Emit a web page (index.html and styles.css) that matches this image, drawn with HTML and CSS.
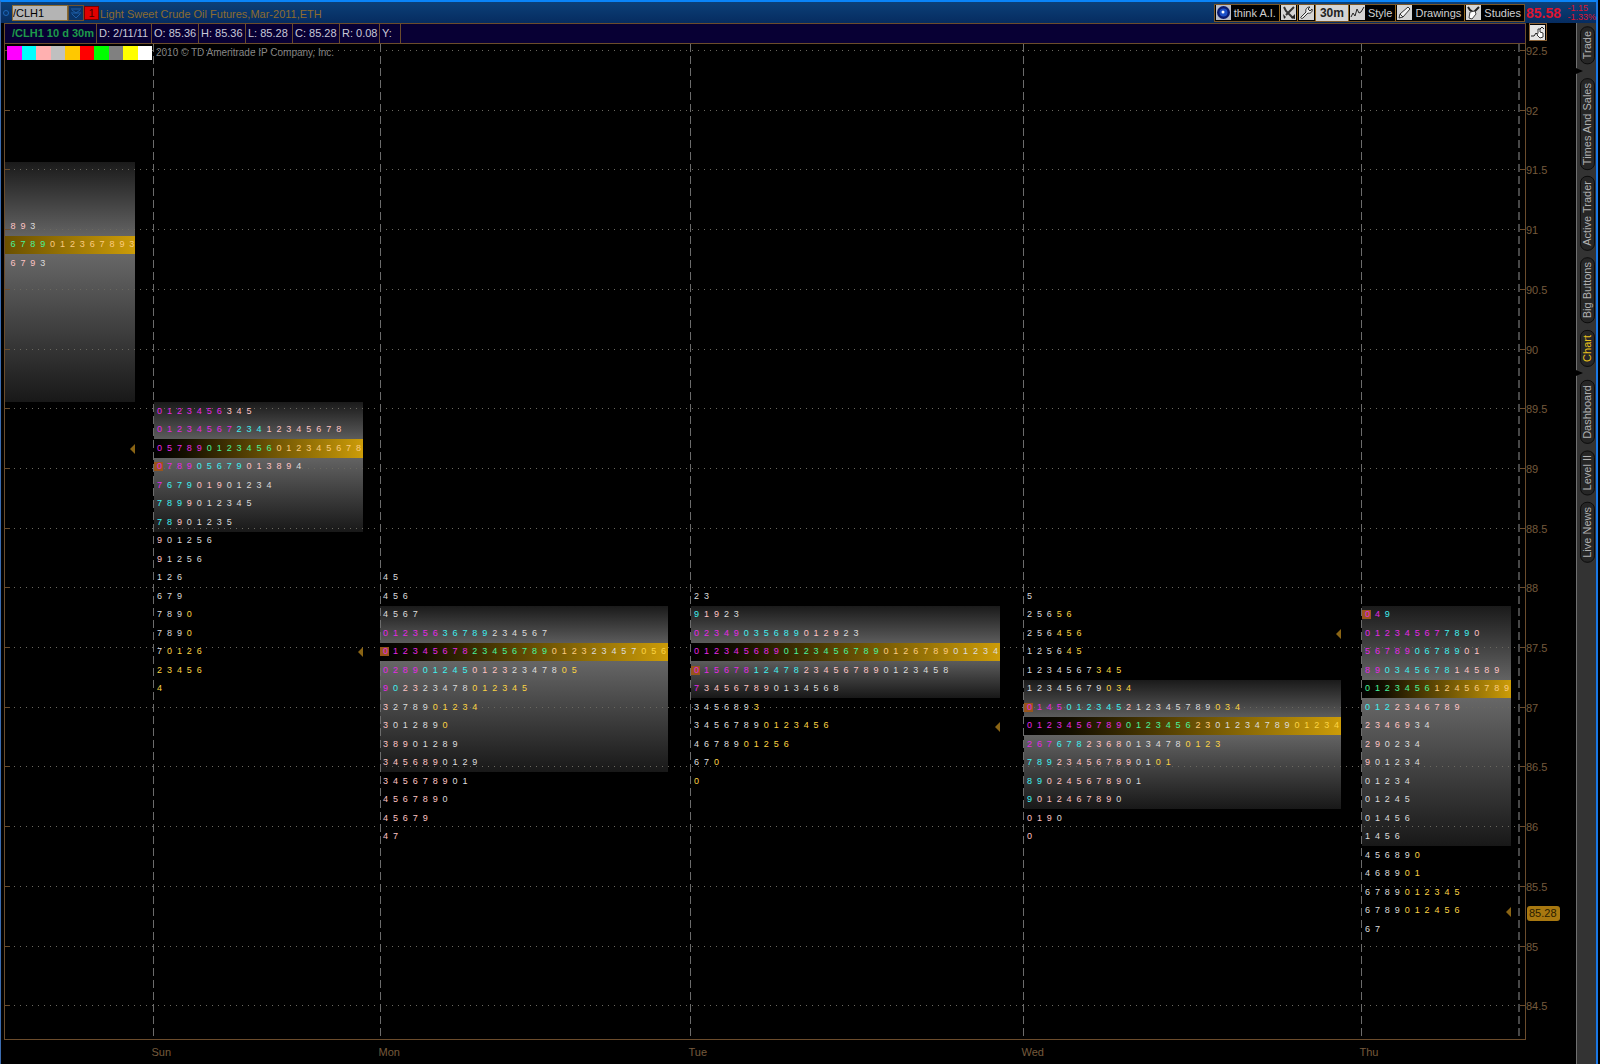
FILE: index.html
```html
<!DOCTYPE html>
<html lang="en">
<head>
  <meta charset="UTF-8">
  <meta name="viewport" content="width=device-width, initial-scale=1.0">
  <title>/CLH1 - Chart</title>
  <link rel="stylesheet" href="styles.css">
</head>
<body>
  <div class="window">
    <header class="topbar">
      <span class="link-dot"></span>
      <input class="symbol" type="text" value="/CLH1" aria-label="Symbol">
      <button class="symbol-drop" aria-label="Symbol list">
        <svg viewBox="0 0 14 14" width="14" height="14"><path d="M2 3h10M3 4l4 3 4-3M2 7h10M3 8l4 4 4-4" fill="none" stroke="#1d5fa8"/></svg>
      </button>
      <button class="link-color">1</button>
      <h1 class="title">Light Sweet Crude Oil Futures,Mar-2011,ETH</h1>

      <div class="toolbar">
        <button class="tool">
          <svg class="icon" viewBox="0 0 15 15"><rect width="15" height="15" fill="#b8bcc8"/><circle cx="7.5" cy="7.5" r="6.5" fill="#0a1a70"/><circle cx="7.5" cy="7.5" r="4" fill="#1c50c8"/><circle cx="7" cy="7" r="1.5" fill="#fff"/></svg>
          think A.I.
        </button>
        <button class="tool" aria-label="Cursor tools">
          <svg class="icon" viewBox="0 0 15 15"><rect width="15" height="15" fill="#d4d4d4"/><path d="M3 2l2 4 7 7M13 2L5 10" fill="none" stroke="#333" stroke-width="2"/><path d="M2 9l3 3-2 2zM10 13l4-4v5z" fill="#222"/></svg>
        </button>
        <button class="tool" aria-label="Settings">
          <svg class="icon" viewBox="0 0 15 15"><rect width="15" height="15" fill="#d4d4d4"/><path d="M2 12l5-5c-1-3 1-5 4-5L9 4l2 2 2-2c1 3-2 5-4 4l-5 5c-1 1-3 0-2-1z" fill="#eee" stroke="#333"/></svg>
        </button>
        <button class="tool period">30m</button>
        <button class="tool">
          <svg class="icon" viewBox="0 0 15 15"><rect width="15" height="15" fill="#d4d4d4"/><path d="M1 12l2-4 2 3 2-7 2 4 2-1 3-5" fill="none" stroke="#222"/></svg>
          Style
        </button>
        <button class="tool">
          <svg class="icon" viewBox="0 0 15 15"><rect width="15" height="15" fill="#d4d4d4"/><path d="M2 13l1-4 8-7 2 2-7 8zM3 9l3 3" fill="#f4f4f4" stroke="#333"/></svg>
          Drawings
        </button>
        <button class="tool">
          <svg class="icon" viewBox="0 0 15 15"><rect width="15" height="15" fill="#d4d4d4"/><path d="M2 2l2 3 3 2M13 2L8 7" fill="none" stroke="#222" stroke-width="2"/><path d="M4 7l5-1 1 3-4 5-3-1z" fill="#fff" stroke="#444"/></svg>
          Studies
        </button>
      </div>
      <div class="quote">
        <strong>85.58</strong>
        <div class="change"><span>-1.15</span><span>-1.33%</span></div>
      </div>
    </header>

    <div class="workspace">
      <main class="chart-area">
        <div class="status-row">
          <div class="status">
            <span class="cell name">/CLH1 10 d 30m</span>
            <span class="cell date">D: 2/11/11</span>
            <span class="cell">O: 85.36</span>
            <span class="cell">H: 85.36</span>
            <span class="cell">L: 85.28</span>
            <span class="cell">C: 85.28</span>
            <span class="cell range">R: 0.08</span>
            <span class="cell last">Y:</span>
          </div>
          <div class="axis-head">
            <button class="pan" aria-label="Pan chart">
              <svg viewBox="0 0 15 15" width="15" height="15"><rect width="15" height="15" fill="#e4e4e4"/><path d="M1 11h3l2-3 2 2M10 4l2-2 2 2" fill="none" stroke="#222"/><path d="M8 8V4h2v3l3 1v4l-3 1-3-3z" fill="#fff" stroke="#333"/></svg>
            </button>
          </div>
        </div>
        <svg id="chart" class="chart" viewBox="0 0 1572 1020"></svg>
      </main>

      <nav class="side-tabs">
        <button class="tab">Trade</button>
        <span class="notch"></span>
        <button class="tab">Times And Sales</button>
        <button class="tab">Active Trader</button>
        <button class="tab">Big Buttons</button>
        <button class="tab active">Chart</button>
        <span class="notch"></span>
        <button class="tab">Dashboard</button>
        <button class="tab">Level II</button>
        <button class="tab">Live News</button>
      </nav>
    </div>
  </div>
  <script src="chart.js"></script>
</body>
</html>
```
FILE: styles.css
```css
* {
  box-sizing: border-box;
}
body {
  margin: 0;
  background: #000;
  color: #c8c8d8;
  font-family: "Liberation Sans", Arial, sans-serif;
  font-size: 11px;
}
button, input {
  font: inherit;
  margin: 0;
  padding: 0;
  border: 0;
  border-radius: 0;
}
.window {
  display: flex;
  flex-direction: column;
  min-height: 100vh;
  border: solid #1a78e6;
  border-width: 2px 2px 0 1px;
  border-left-color: #3c6cb0;
  border-top-color: #0a84f8;
  margin-right: 2px;
}

/* top bar */
.topbar {
  display: flex;
  align-items: center;
  height: 21px;
  padding-left: 2px;
  background: linear-gradient(#0c4078, #062c60);
}
.link-dot {
  width: 6px;
  height: 6px;
  margin-right: 3px;
  border: 1px solid #1d66b8;
  border-radius: 50%;
}
.symbol {
  width: 56px;
  height: 16px;
  background: #b4b4b4;
  border: 1px solid #8a6a30;
  color: #000;
}
.symbol-drop {
  width: 16px;
  height: 16px;
  background: #0a3468;
  border: 1px solid #6b5230;
}
.symbol-drop svg {
  display: block;
}
.link-color {
  width: 15px;
  height: 14px;
  background: #e00000;
  border: 1px solid #700;
  color: #400;
}
.title {
  flex: 1;
  margin: 2px 0 0 1px;
  font-size: 11px;
  font-weight: normal;
  color: #8c6c30;
}
.toolbar {
  display: flex;
  height: 18px;
  border: 1px solid #7a5626;
  background: #000;
}
.tool {
  display: flex;
  align-items: center;
  gap: 3px;
  padding: 0 3px 0 1px;
  background: #000;
  color: #d0d0d0;
  border-right: 1px solid #96681e;
}
.tool[aria-label] {
  padding-right: 1px;
}
.tool:last-child {
  border-right: 0;
}
.icon {
  width: 15px;
  height: 15px;
}
.tool.period {
  padding: 0 4px;
  background: #d4d4d4;
  color: #222;
  font-size: 12px;
  font-weight: bold;
}
.quote {
  display: flex;
  align-items: center;
  justify-content: space-between;
  width: 71px;
  padding-left: 1px;
  color: #dc1430;
}
.quote strong {
  font-size: 14px;
}
.change {
  display: flex;
  flex-direction: column;
  font-size: 9px;
  line-height: 9px;
}

/* chart column */
.workspace {
  display: flex;
  flex: 1;
}
.chart-area {
  flex: 1;
  padding-left: 3px;
}
.status-row {
  display: flex;
  height: 21px;
}
.status {
  display: flex;
  flex: 1;
  background: #080034;
  border: 1px solid #6b4c2c;
}
.cell {
  width: 47px;
  padding-left: 2px;
  line-height: 19px;
  white-space: nowrap;
  border-right: 1px solid #6b4c2c;
}
.name {
  width: 92px;
  padding-left: 7px;
  color: #1e9a4a;
  font-weight: bold;
}
.date {
  width: 55px;
}
.range {
  width: 40px;
}
.last {
  width: 21px;
}
.axis-head {
  width: 50px;
  padding: 0 3px;
}
.pan {
  width: 18px;
  height: 18px;
  background: #000;
  border: 1px solid #8a6236;
}
.pan svg {
  display: block;
}
.chart {
  display: block;
  width: 100%;
  height: auto;
}

/* svg parts */
.frame, .tick {
  stroke: #6b4c2c;
  fill: none;
  shape-rendering: crispEdges;
}
.grid {
  stroke: #6a6860;
  stroke-dasharray: 1 5;
  shape-rendering: crispEdges;
}
.session {
  stroke: #6c6c6c;
  stroke-dasharray: 8 4;
  shape-rendering: crispEdges;
}
.session.end {
  stroke: #484848;
  stroke-width: 2px;
}
.label {
  fill: #755a3c;
  font-size: 11px;
}
.copyright {
  fill: #858585;
  font-size: 10px;
}
.digit {
  font-size: 9px;
  text-anchor: middle;
}
.m { fill: #e628e6; }
.c { fill: #40f0f0; }
.p { fill: #ffc4c4; }
.w { fill: #dcdcdc; }
.y { fill: #fcd444; }
.g { fill: #48f49c; }
.o { fill: #fccc80; }
.open-mark {
  fill: #98541c;
}
.close-mark {
  fill: #8a6414;
}
.badge {
  fill: #a87810;
}
.badge-text {
  fill: #2a1c00;
  font-size: 11px;
}

/* right side tabs */
.side-tabs {
  display: flex;
  flex-direction: column;
  align-items: center;
  width: 20px;
  padding: 3px 0 0 2px;
  gap: 6px;
  background: #333;
  border-left: 1px solid #707070;
}
.tab {
  width: 15px;
  padding: 4px 0;
  line-height: 13px;
  writing-mode: vertical-rl;
  transform: rotate(180deg);
  background: #262626;
  border: 1px solid #0c0c0c;
  border-radius: 7px;
  color: #b0b0b0;
}
.tab.active {
  color: #e8c01c;
}
.notch {
  align-self: flex-start;
  margin: -2px 0 -2px -3px;
  border: solid transparent;
  border-width: 3px 0 3px 7px;
  border-left-color: #000;
}
```
FILE: chart.js
```javascript
const chart = document.getElementById("chart");
const NS = "http://www.w3.org/2000/svg";

const ROW_HEIGHT = 18.5;
const FIRST_ROW = 367;   // centre of row 0
const AXIS_X = 1521;
const BOTTOM = 995;

// Each profile: x, width, value area rows [from, to), the control row, the first printed row.
// m, c, p, w, y are the time brackets; g and o are c and p on the gold row; # is the opening print.
const profiles = [
  { x: 1, width: 130, area: [-13, 0], poc: -9, first: -10, rows: ["p89 w3", "g6789 o012367893", "p679 w3"] },
  { x: 150, width: 209, area: [0, 7], poc: 2, first: 0, rows: [
    "m0123456 p345", "m01234567 c234 p12345678", "m05789 g0123456 o012345678",
    "#0 m789 c05679 p01389 w4", "m7 c679 p019 w01234", "c789 p9 w012345", "c78 p9 w01235",
    "p9 w01256", "p9 w1256", "w126", "w679", "w789 y0", "w789 y0", "w7 y0126", "y23456", "y4"] },
  { x: 376, width: 288, area: [11, 20], poc: 13, first: 9, rows: [
    "w45", "w456", "w4567", "m012356 c36789 w234567", "#0 m12345678 g23456789 o0123 w23457 y056",
    "m0289 c01245 p0123 w23478 y05", "m9 c0 p23 w23478 y012345", "p3 w2789 y01234", "p3 w01289 y0",
    "p389 w01289", "p345689 w0129", "p3456789 w01", "p456789 w0", "p45679", "p47"] },
  { x: 687, width: 309, area: [11, 16], poc: 13, first: 10, rows: [
    "w23", "c9 p19 w23", "m02349 c035689 p0129 w23", "m012345689 g0123456789 o0126789 w01234",
    "#0 m15678 c12478 p23456789 w0123458", "m7 p3456789 w0134568", "w345689 y3", "w3456789 y0123456",
    "w46789 y01256", "w67 y0", "y0"] },
  { x: 1020, width: 317, area: [15, 22], poc: 17, first: 10, rows: [
    "w5", "w256 y56", "w256 y456", "w1256 y45", "w1234567 y345", "w12345679 y034",
    "#0 m145 c012345 p2 w12345789 y034", "m0123456789 g0123456 o23 w01234789 y01234",
    "m267 c678 p2368 w013478 y0123", "c789 p23456789 w01 y01", "c89 p02456789 w01",
    "c9 p01246789 w0", "p019 w0", "p0"] },
  { x: 1358, width: 149, area: [11, 24], poc: 15, first: 11, rows: [
    "#0 m4 c9", "m01234567 c789 p0", "m56789 c06789 p01", "m89 c0345678 p14589",
    "g0123456 o12456789", "c012 p2346789", "p23469 w34", "p29 w0234", "p9 w01234", "w01234",
    "w01245", "w01456", "w1456", "w45689 y0", "w4689 y01", "w6789 y012345", "w6789 y012456", "w67"] }
];
const sessions = [[149.5, "Sun"], [376.5, "Mon"], [686.5, "Tue"], [1019.5, "Wed"], [1357.5, "Thu"]];
const arrows = [[131, 405], [359, 608], [996, 683], [1337, 590], [1507, 868]];
const swatches = ["#f0f", "#0ff", "#ffb0b0", "#c0c0c0", "#ffc800", "#f00", "#0f0", "#808080", "#ff0", "#fff"];

function add(tag, attrs, text) {
  const el = document.createElementNS(NS, tag);
  for (const key in attrs) el.setAttribute(key, attrs[key]);
  if (text !== undefined) el.textContent = text;
  chart.appendChild(el);
  return el;
}
function line(x1, y1, x2, y2, cls) {
  add("line", { x1, y1, x2, y2, class: cls });
}
function gradient(id, vertical, stops) {
  const g = add("linearGradient", { id, x1: 0, y1: 0, x2: vertical ? 0 : 1, y2: vertical ? 1 : 0 });
  for (const [offset, color] of stops) {
    const s = document.createElementNS(NS, "stop");
    s.setAttribute("offset", offset);
    s.setAttribute("stop-color", color);
    g.appendChild(s);
  }
}
const rowTop = row => Math.ceil(FIRST_ROW + (row - 0.5) * ROW_HEIGHT);
const rowMid = row => Math.floor(FIRST_ROW + row * ROW_HEIGHT);

// value areas
profiles.forEach((p, i) => {
  const top = rowTop(p.area[0]), bottom = rowTop(p.area[1]);
  const peak = (p.poc + 0.5 - p.area[0]) / (p.area[1] - p.area[0]);
  gradient("area" + i, true, [[0, "#1a1a1a"], [peak, "#6c6c6c"], [1, "#181818"]]);
  add("rect", { x: p.x, y: top, width: p.width, height: bottom - top, fill: `url(#area${i})` });
});

// price grid
for (let i = 0; i <= 16; i++) {
  const y = Math.floor(6.5 + i * 59.7) + 0.5;
  line(10, y, AXIS_X - 6, y, "grid");
  line(0, y, 6, y, "tick");
  line(AXIS_X - 5, y, AXIS_X, y, "tick");
  add("text", { x: AXIS_X + 1, y: y + 4, class: "label" }, 92.5 - i * 0.5);
}
for (const [x, day] of sessions) {
  line(x, 0, x, BOTTOM, "session");
  add("text", { x: x - 2, y: 1012, class: "label" }, day);
}
line(1515, 0, 1515, BOTTOM, "session end");
add("path", { d: `M0.5 0V${BOTTOM + 0.5}H${AXIS_X + 0.5}V0`, class: "frame" });

// control rows and digits, the first profile is cut off by the left edge
gradient("gold", false, [[0, "#000"], [0.15, "#140f00"], [1, "#cc9c08"]]);
gradient("gold-cut", false, [[0, "#6a5000"], [1, "#cc9c08"]]);

profiles.forEach((p, i) => {
  const top = rowTop(p.poc);
  add("rect", { x: p.x, y: top, width: p.width, height: rowTop(p.poc + 1) - top, fill: i ? "url(#gold)" : "url(#gold-cut)" });
  const count = p.rows[p.poc - p.first].replace(/\D/g, "").length;
  const step = i ? p.width / count : 9.9;
  const start = p.x + (i ? 5.5 : 8);
  p.rows.forEach((row, r) => {
    const mid = rowMid(p.first + r);
    let n = 0;
    for (const run of row.split(" ")) {
      for (const digit of run.slice(1)) {
        if (run[0] === "#") add("rect", { x: p.x, y: mid - 4, width: 9, height: 9, class: "open-mark" });
        add("text", { x: start + n * step, y: mid + 3, class: "digit " + (run[0] === "#" ? "m" : run[0]) }, digit);
        n++;
      }
    }
  });
});

// closing price arrows
for (const [x, y] of arrows) {
  add("path", { d: `M${x} ${y - 5}v10l-5-5z`, class: "close-mark" });
}

swatches.forEach((fill, i) => {
  add("rect", { x: Math.round(3 + i * 14.5), y: 2, width: i < 9 ? 15 : 14, height: 14, fill });
});
add("text", { x: 152, y: 12, class: "copyright" }, "2010 © TD Ameritrade IP Company, Inc.");

// last price
add("rect", { x: 1523, y: 862, width: 33, height: 15, rx: 3, class: "badge" });
add("text", { x: 1525, y: 873, class: "badge-text" }, "85.28");
```
